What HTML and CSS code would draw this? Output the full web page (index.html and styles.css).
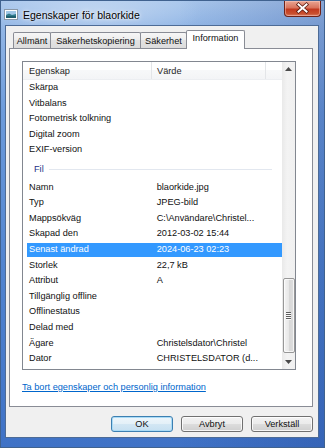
FILE: index.html
```html
<!DOCTYPE html>
<html lang="sv">
<head>
<meta charset="utf-8">
<title>Egenskaper för blaorkide</title>
<link rel="stylesheet" href="styles.css">
</head>
<body>
<div class="window">
  <div class="titlebar">
    <svg class="app-icon" width="14" height="11" viewBox="0 0 14 11">
      <rect x="0.5" y="0.5" width="13" height="10" fill="#fdfdfd" stroke="#8a98a8"/>
      <rect x="2" y="2" width="10" height="4" fill="#9fc6e6"/>
      <path d="M2 6 L5 4.5 L8 6 L12 5 L12 9 L2 9 Z" fill="#2f7a8a"/>
      <rect x="2" y="7" width="10" height="2" fill="#1f5e6e"/>
    </svg>
    <span class="title">Egenskaper för blaorkide</span>
    <div class="close">
      <svg width="37" height="16" viewBox="0 0 37 16">
        <path d="M14.5 4.5 L22.5 11.5 M22.5 4.5 L14.5 11.5" stroke="#5b1a10" stroke-width="3.6" stroke-linecap="square"/>
        <path d="M14.5 4.5 L22.5 11.5 M22.5 4.5 L14.5 11.5" stroke="#ffffff" stroke-width="2" stroke-linecap="square"/>
      </svg>
    </div>
  </div>
  <div class="client">
    <div class="tabs">
      <div class="tab tab-allmant">Allmänt</div>
      <div class="tab tab-backup">Säkerhetskopiering</div>
      <div class="tab tab-security">Säkerhet</div>
      <div class="tab tab-info active">Information</div>
    </div>
    <div class="panel">
      <div class="listview">
        <div class="list-main">
          <div class="header">
            <div class="hcol hcol1">Egenskap</div>
            <div class="hcol hcol2">Värde</div>
            <div class="hcol hcol3"></div>
          </div>
          <div class="rows">
            <div class="row"><span class="c1">Skärpa</span><span class="c2"></span></div>
            <div class="row"><span class="c1">Vitbalans</span><span class="c2"></span></div>
            <div class="row"><span class="c1">Fotometrisk tolkning</span><span class="c2"></span></div>
            <div class="row"><span class="c1">Digital zoom</span><span class="c2"></span></div>
            <div class="row"><span class="c1">EXIF-version</span><span class="c2"></span></div>
            <div class="group"><span class="gtitle">Fil</span><span class="gline"></span></div>
            <div class="row"><span class="c1">Namn</span><span class="c2">blaorkide.jpg</span></div>
            <div class="row"><span class="c1">Typ</span><span class="c2">JPEG-bild</span></div>
            <div class="row"><span class="c1">Mappsökväg</span><span class="c2">C:\Användare\Christel...</span></div>
            <div class="row"><span class="c1">Skapad den</span><span class="c2">2012-03-02 15:44</span></div>
            <div class="row selected"><span class="c1">Senast ändrad</span><span class="c2">2024-06-23 02:23</span></div>
            <div class="row"><span class="c1">Storlek</span><span class="c2">22,7 kB</span></div>
            <div class="row"><span class="c1">Attribut</span><span class="c2">A</span></div>
            <div class="row"><span class="c1">Tillgänglig offline</span><span class="c2"></span></div>
            <div class="row"><span class="c1">Offlinestatus</span><span class="c2"></span></div>
            <div class="row"><span class="c1">Delad med</span><span class="c2"></span></div>
            <div class="row"><span class="c1">Ägare</span><span class="c2">Christelsdator\Christel</span></div>
            <div class="row"><span class="c1">Dator</span><span class="c2">CHRISTELSDATOR (d...</span></div>
          </div>
        </div>
        <div class="scrollbar">
          <div class="sb-btn">
            <svg width="7" height="4" viewBox="0 0 7 4"><path d="M0 4 L3.5 0 L7 4 Z" fill="#4a4a4a"/></svg>
          </div>
          <div class="sb-track"></div>
          <div class="sb-thumb">
            <span class="grip"></span><span class="grip"></span><span class="grip"></span><span class="grip"></span>
          </div>
          <div class="sb-gap"></div>
          <div class="sb-btn">
            <svg width="7" height="4" viewBox="0 0 7 4"><path d="M0 0 L7 0 L3.5 4 Z" fill="#4a4a4a"/></svg>
          </div>
        </div>
      </div>
      <a class="link" href="#">Ta bort egenskaper och personlig information</a>
    </div>
    <div class="buttons">
      <div class="btn default">OK</div>
      <div class="btn">Avbryt</div>
      <div class="btn">Verkställ</div>
    </div>
  </div>
</div>
</body>
</html>
```
FILE: styles.css
```css
* { box-sizing: border-box; margin: 0; padding: 0; }
html, body { width: 325px; height: 448px; overflow: hidden; }
body {
  font-family: "Liberation Sans", Arial, sans-serif;
  font-size: 9.2px;
  color: #111;
  background: #5b8bd3;
}
.window {
  width: 325px;
  height: 448px;
  display: flex;
  flex-direction: column;
  border: 1px solid #40628f;
  background:
    radial-gradient(ellipse 160px 40px at 90px 12px, rgba(255,255,255,0.35), rgba(255,255,255,0) 70%),
    linear-gradient(to right, rgba(0,0,0,0) 55%, rgba(20,50,130,0.22) 100%),
    linear-gradient(to bottom, #a9c7ec 0, #93b7e6 24px, #6d9bdb 110px, #5285d0 260px, #3f72c6 100%);
}
.titlebar {
  height: 24px;
  flex: 0 0 24px;
  display: flex;
  align-items: flex-start;
}
.app-icon { margin: 8px 0 0 3px; flex: 0 0 auto; }
.title {
  margin: 8px 0 0 5px;
  font-size: 10.5px;
  line-height: 12px;
  color: #000;
  text-shadow: 0 0 5px rgba(255,255,255,0.95), 0 0 2px rgba(255,255,255,0.8);
}
.close {
  margin-left: auto;
  margin-right: 3px;
  width: 37px;
  height: 16px;
  border: 1px solid #6e2218;
  border-top: none;
  border-radius: 0 0 4px 4px;
  background: linear-gradient(to bottom, #e9a593 0, #d9735c 45%, #c2391f 55%, #c9502f 85%, #d8806a 100%);
  box-shadow: inset 0 0 0 1px rgba(255,210,200,0.45);
}
.close svg { display: block; margin: -1px 0 0 -1px; }
.client {
  margin: 0 5px 0 4px;
  height: 413px;
  flex: 0 0 413px;
  border: 1px solid #4d6b96;
  background: #f0f0f0;
  display: flex;
  flex-direction: column;
  padding-top: 4px;
}
.tabs {
  display: flex;
  align-items: flex-end;
  height: 18px;
  margin-left: 7px;
  flex: 0 0 18px;
}
.tab {
  height: 16px;
  line-height: 13px;
  padding-top: 2px;
  text-align: center;
  border: 1px solid #898c95;
  border-bottom: none;
  border-radius: 2px 2px 0 0;
  margin-right: -1px;
  background: linear-gradient(to bottom, #f6f6f6 0, #ececec 50%, #e2e2e2 50%, #dcdcdc 100%);
  color: #111;
  white-space: nowrap;
}
.tab-allmant { width: 38px; }
.tab-backup { width: 91px; }
.tab-security { width: 47px; }
.tab-info { width: 59px; }
.tab.active {
  height: 19px;
  margin-bottom: -1px;
  background: #fff;
  position: relative;
  z-index: 1;
  padding-top: 1px;
}
.panel {
  margin-left: 3px;
  width: 304px;
  height: 359px;
  flex: 0 0 359px;
  border: 1px solid #898c95;
  background: #fff;
  padding: 12px 0 0 12px;
  display: flex;
  flex-direction: column;
}
.listview {
  width: 274px;
  height: 309px;
  border: 1px solid #828790;
  display: flex;
}
.list-main { flex: 1; display: flex; flex-direction: column; }
.header {
  height: 18px;
  flex: 0 0 18px;
  display: flex;
  background: linear-gradient(to bottom, #ffffff 0, #ffffff 50%, #f7f8f9 50%, #f3f4f6 100%);
  border-bottom: 1px solid #eceef1;
}
.hcol {
  line-height: 18px;
  color: #1f1f1f;
  border-right: 1px solid #e3e5e8;
}
.hcol1 { width: 129px; padding-left: 6px; }
.hcol2 { width: 114px; padding-left: 5px; }
.hcol3 { flex: 1; border-right: none; }
.rows { padding-left: 4px; }
.row {
  display: grid;
  grid-template-columns: 125px 113.7px;
  height: 15.6px;
  line-height: 15.6px;
  white-space: nowrap;
}
.c1 { padding-left: 2px; }
.c2 { padding-left: 4.7px; overflow: hidden; }
.row.selected {
  color: #fff;
  background: linear-gradient(to bottom, transparent 0.8px, #3399ff 0.8px, #3399ff calc(100% - 0.8px), transparent calc(100% - 0.8px));
}
.group {
  height: 21.6px;
  display: flex;
  align-items: center;
  padding-top: 1px;
}
.gtitle { padding-left: 7px; color: #1e3287; line-height: 12px; }
.gline {
  flex: 1;
  height: 1px;
  margin: 0 10px 0 5px;
  background: #e2e7ef;
}
.scrollbar {
  width: 13px;
  flex: 0 0 13px;
  display: flex;
  flex-direction: column;
  background: linear-gradient(to right, #e9e9e9 0, #f3f3f3 40%, #f0f0f0 100%);
}
.sb-btn {
  height: 14px;
  flex: 0 0 14px;
  display: flex;
  align-items: center;
  justify-content: center;
}
.sb-track { flex: 0 0 202px; }
.sb-thumb {
  flex: 0 0 75px;
  margin: 0 0 0 0.5px;
  border: 1px solid #979797;
  border-radius: 2px;
  background: linear-gradient(to right, #f4f4f4 0, #e8e8e8 45%, #d8d8d8 55%, #dedede 100%);
  box-shadow: inset 0 0 0 1px rgba(255,255,255,0.7);
  display: flex;
  flex-direction: column;
  align-items: center;
  justify-content: center;
  gap: 1px;
}
.grip {
  width: 5px;
  height: 1px;
  background: #5e5e5e;
  box-shadow: 0 1px 0 #fafafa;
}
.sb-gap { flex: 0 0 2px; }
.link {
  margin-top: 10.7px;
  line-height: 12px;
  color: #0066cc;
  text-decoration: underline;
  align-self: flex-start;
}
.buttons {
  margin-top: 8.7px;
  display: flex;
  justify-content: flex-end;
  gap: 8px;
  padding-right: 5px;
}
.btn {
  width: 62px;
  height: 16px;
  line-height: 14px;
  text-align: center;
  border: 1px solid #707070;
  border-radius: 3px;
  background: linear-gradient(to bottom, #f2f2f2 0, #ebebeb 50%, #dddddd 50%, #cfcfcf 100%);
  box-shadow: inset 0 0 0 1px rgba(255,255,255,0.8);
  color: #111;
}
.btn.default {
  border-color: #3c7fb1;
  background: linear-gradient(to bottom, #eef6fb 0, #e3f0f8 50%, #d3e7f4 50%, #c6e0f1 100%);
  box-shadow: inset 0 0 0 1px #a9dbf6;
}
```
